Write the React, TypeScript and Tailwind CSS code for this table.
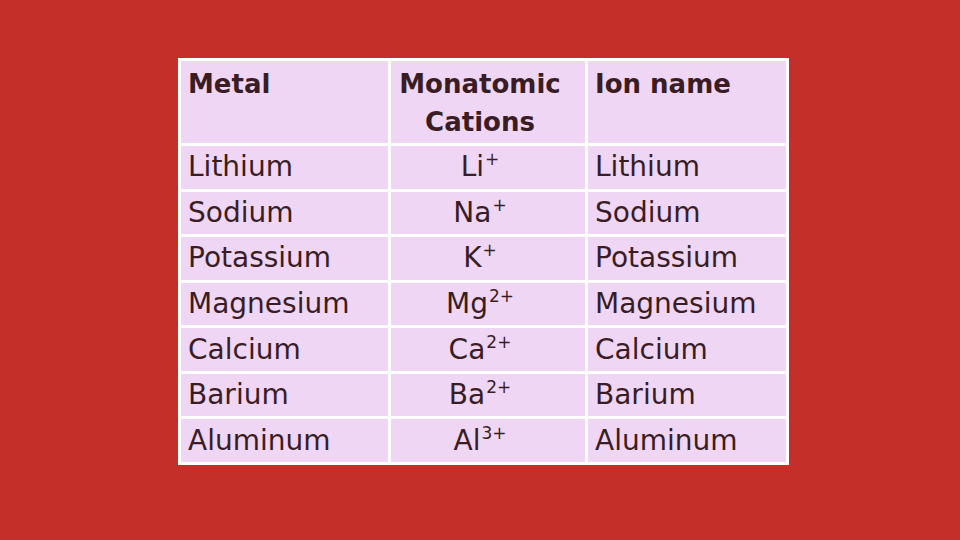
import React from "react";

type Row = { metal: string; symbol: string; charge: string; ion: string };

const rows: Row[] = [
  { metal: "Lithium", symbol: "Li", charge: "+", ion: "Lithium" },
  { metal: "Sodium", symbol: "Na", charge: "+", ion: "Sodium" },
  { metal: "Potassium", symbol: "K", charge: "+", ion: "Potassium" },
  { metal: "Magnesium", symbol: "Mg", charge: "2+", ion: "Magnesium" },
  { metal: "Calcium", symbol: "Ca", charge: "2+", ion: "Calcium" },
  { metal: "Barium", symbol: "Ba", charge: "2+", ion: "Barium" },
  { metal: "Aluminum", symbol: "Al", charge: "3+", ion: "Aluminum" },
];

const cell = "bg-[#efd6f4] leading-[38px]";

export default function App() {
  return (
    <div className="w-[960px] h-[540px] bg-[#c42f29] flex items-start justify-start">
      <div
        className="mt-[58px] ml-[178px] w-[611px] h-[407px] bg-white p-[3px] grid grid-cols-[207px_194px_1fr] grid-rows-[82px_repeat(7,1fr)] gap-[3px] text-[#3a1d24] text-[28px]"
        style={{ fontFamily: '"Comic Sans MS", "DejaVu Sans", sans-serif' }}
      >
        <div className={`${cell} px-[7px] pt-[4px] font-bold text-[26px]`}>Metal</div>
        <div className={`${cell} pl-[0px] pr-[16px] pt-[4px] font-bold text-center text-[26px] leading-[37px]`}>
          Monatomic
          <br />
          Cations
        </div>
        <div className={`${cell} px-[7px] pt-[4px] font-bold text-[26px]`}>Ion name</div>

        {rows.map((r) => (
          <React.Fragment key={r.metal}>
            <div className={`${cell} px-[7px] flex items-center`}>{r.metal}</div>
            <div className={`${cell} pr-[16px] flex items-center justify-center`}>
              <span>
                {r.symbol}
                <sup className="text-[17px] -top-[11px] ml-[1px]">{r.charge}</sup>
              </span>
            </div>
            <div className={`${cell} px-[7px] flex items-center`}>{r.ion}</div>
          </React.Fragment>
        ))}
      </div>
    </div>
  );
}
